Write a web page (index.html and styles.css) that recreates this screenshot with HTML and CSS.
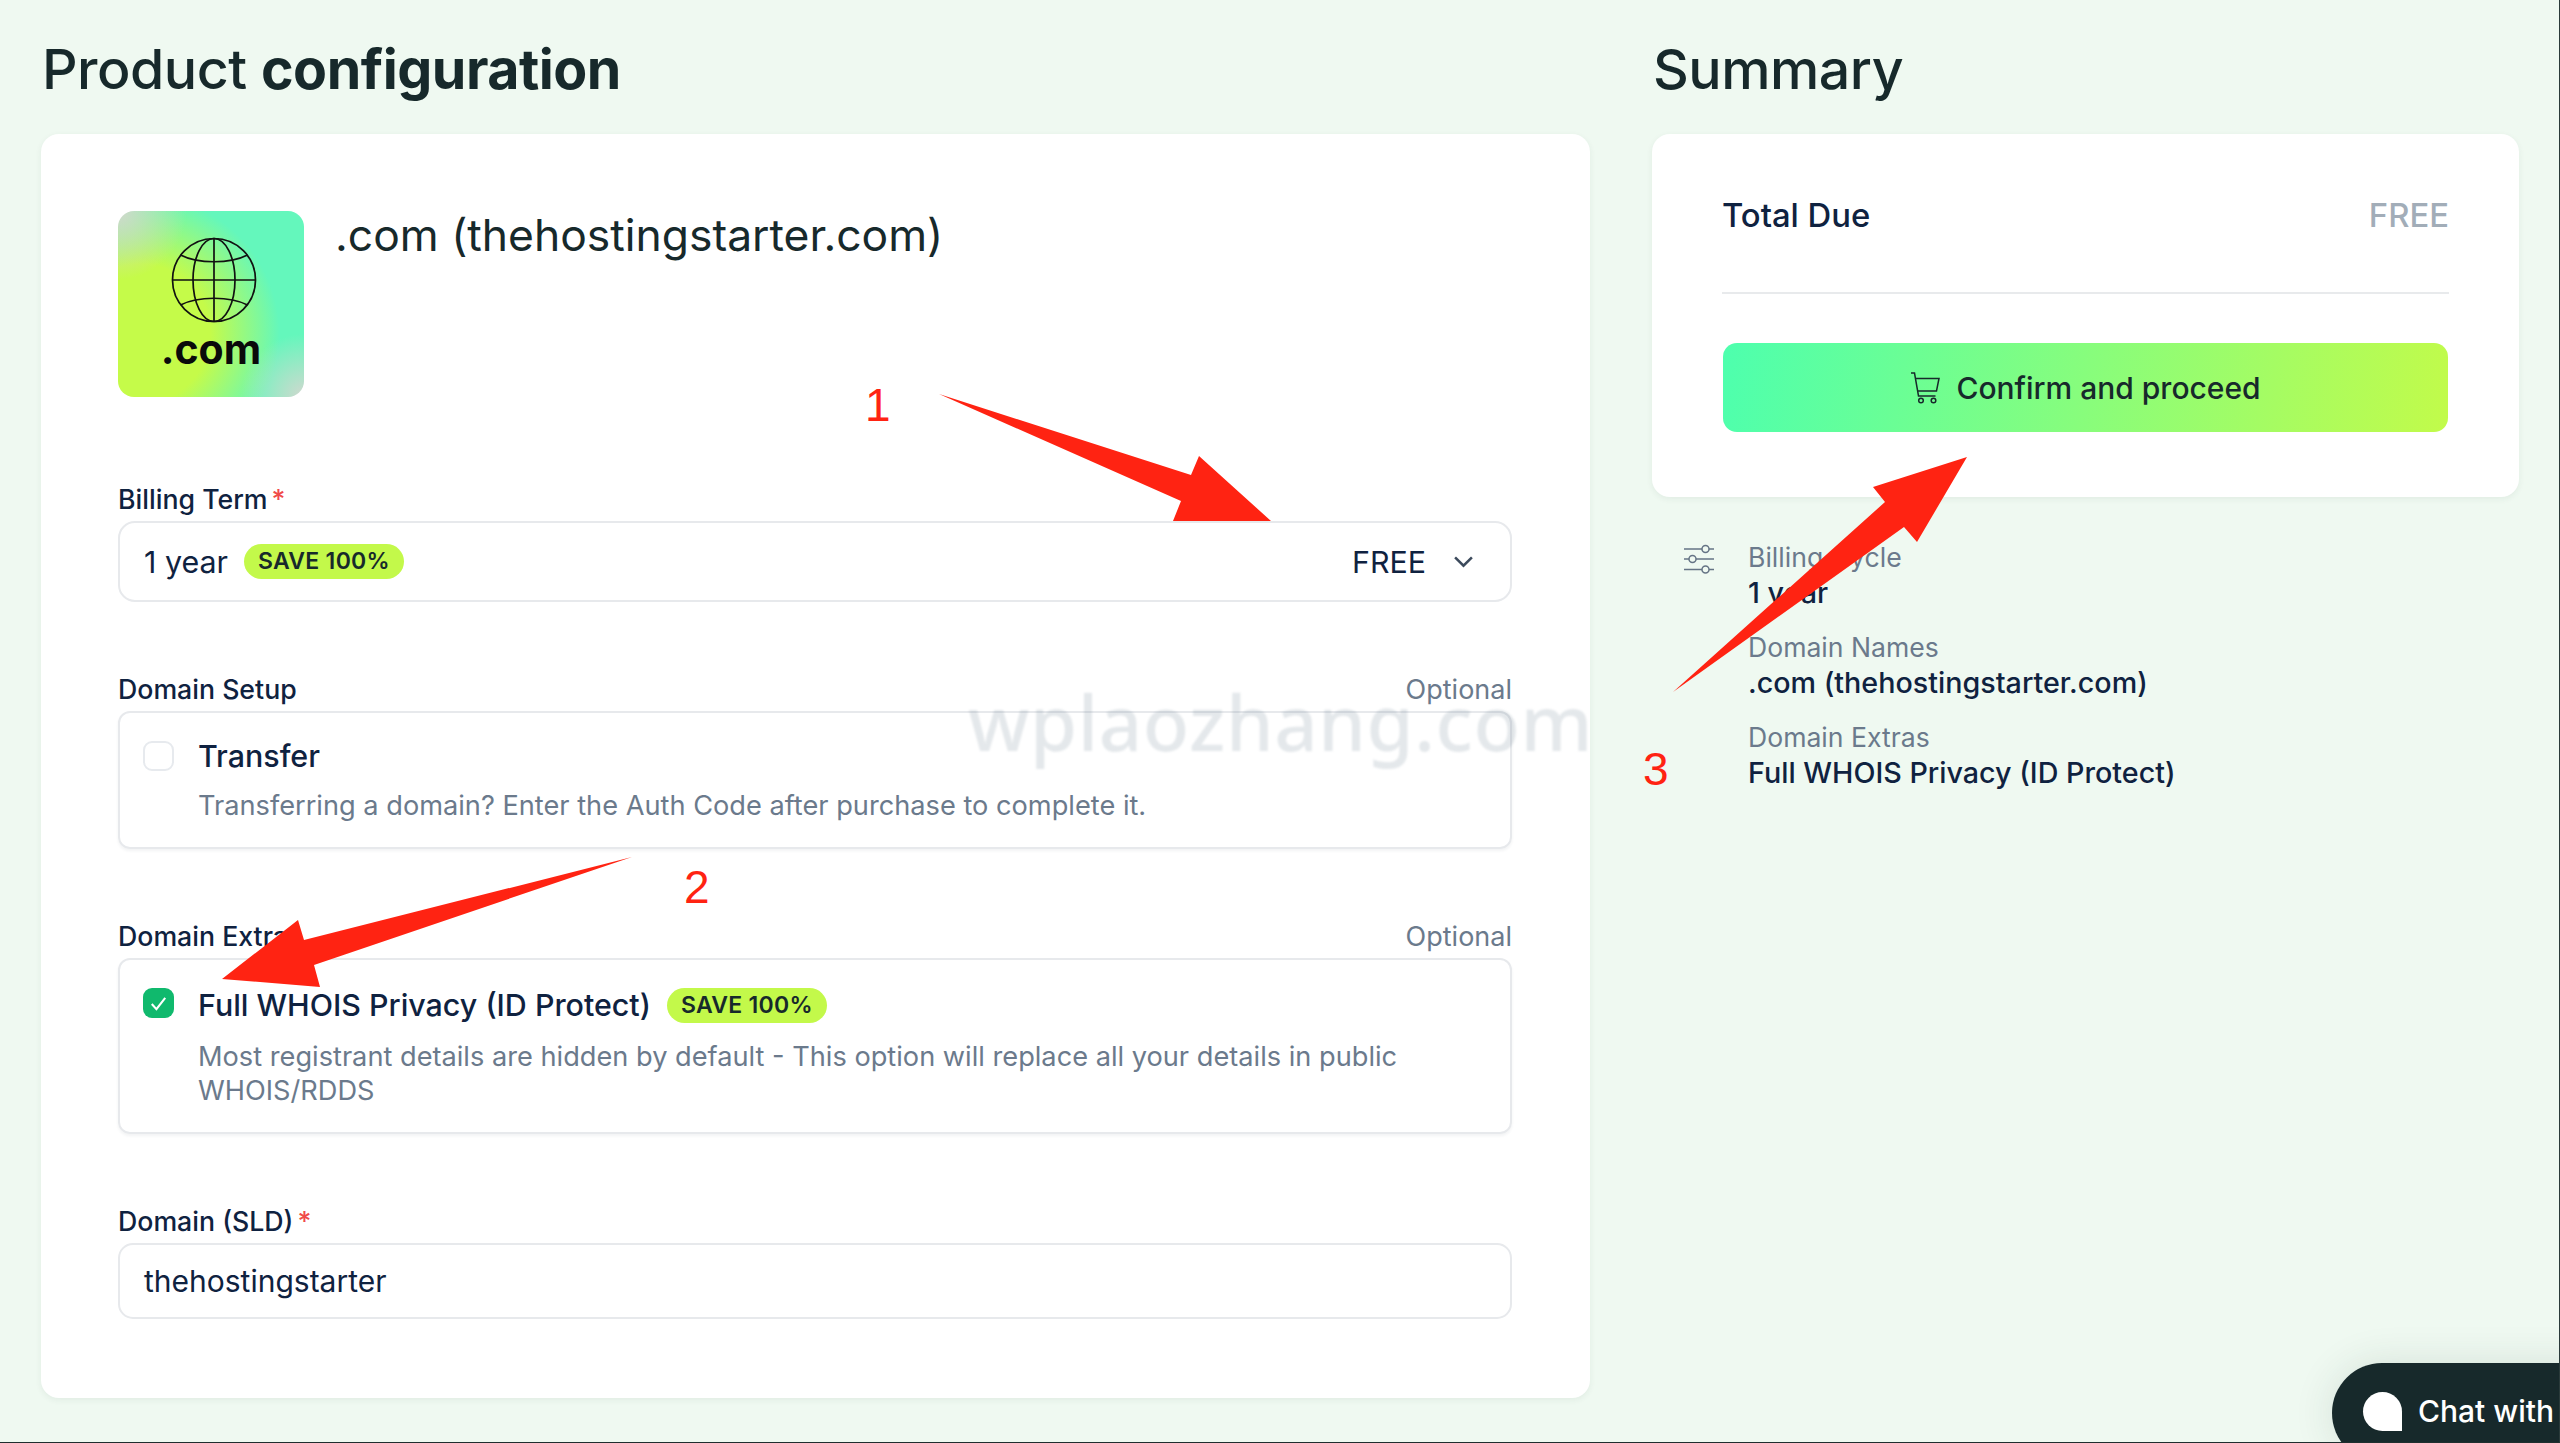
FILE: index.html
```html
<!DOCTYPE html>
<html>
	<head>
		<meta charset="UTF-8">
		<title>Product configuration</title>
		<link rel="stylesheet" href="styles.css">
	</head>
	<body>
		<div class="page">
			<div class="main-col">
				<h1 class="page-title">Product <b>configuration</b></h1>
				<div class="card config-card">
					<div class="product-head">
						<div class="product-logo">
							<svg class="globe" viewBox="0 0 88 88" fill="none" stroke="#111" stroke-width="1.7">
								<circle cx="44" cy="44" r="41.5"/>
								<ellipse cx="44" cy="44" rx="21" ry="41.5"/>
								<path d="M44 2.5V85.5M2.5 44H85.5"/>
								<path d="M10.500 19C28 28 60 28 77.500 19"/>
								<path d="M10.500 69C28 60 60 60 77.500 69"/>
							</svg>
							<span class="logo-text">.com</span>
						</div>
						<div class="product-name">.com (thehostingstarter.com)</div>
					</div>

					<div class="field field-first">
						<div class="field-label"><span>Billing Term<i class="req">*</i></span></div>
						<div class="select-box">
							<span class="select-value">1 year</span>
							<span class="badge">SAVE 100%</span>
							<span class="select-price">FREE</span>
							<svg class="chevron" viewBox="0 0 20 12" fill="none" stroke="#3c4a5c" stroke-width="2.400">
								<path d="M2 2l8 8 8-8"/>
							</svg>
						</div>
					</div>

					<div class="field">
						<div class="field-label"><span>Domain Setup</span><em>Optional</em></div>
						<div class="option-box">
							<span class="check"></span>
							<div class="option-body">
								<div class="option-title">Transfer</div>
								<div class="option-desc">Transferring a domain? Enter the Auth Code after purchase to complete it.</div>
							</div>
						</div>
					</div>

					<div class="field">
						<div class="field-label"><span>Domain Extras</span><em>Optional</em></div>
						<div class="option-box">
							<span class="check checked">
								<svg viewBox="0 0 30 30" fill="none" stroke="#fff" stroke-width="2">
									<path d="M8.500 15.500l4.500 5 8.500-11"/>
								</svg>
							</span>
							<div class="option-body">
								<div class="option-title with-badge">Full WHOIS Privacy (ID Protect)<span class="badge">SAVE 100%</span></div>
								<div class="option-desc">Most registrant details are hidden by default - This option will replace all your details in public WHOIS/RDDS</div>
							</div>
						</div>
					</div>

					<div class="field">
						<div class="field-label"><span>Domain (SLD)<i class="req">*</i></span></div>
						<div class="text-input">thehostingstarter</div>
					</div>
				</div>
			</div>

			<div class="side-col">
				<h2 class="page-title">Summary</h2>
				<div class="card summary-card">
					<div class="total-row">
						<span>Total Due</span>
						<span class="total-price">FREE</span>
					</div>
					<button class="confirm-btn" type="button">
						<svg class="cart" viewBox="0 0 30 32" fill="none" stroke="#17292b" stroke-width="1.500">
							<path d="M1 1h3.500l4 23h17"/>
							<path d="M5.500 6.500H29l-2.500 12.500H7.500"/>
							<circle cx="11" cy="28.500" r="2.300"/>
							<circle cx="23.500" cy="28.500" r="2.300"/>
						</svg>
						Confirm and proceed
					</button>
				</div>
				<div class="details">
					<svg class="sliders" viewBox="0 0 30 30" fill="none" stroke="#657485" stroke-width="1.500">
						<path d="M0 5h18M25 5h5M0 15h5M12 15h18M0 25.500h18M25 25.500h5"/>
						<circle cx="21.500" cy="5" r="3.500"/>
						<circle cx="8.500" cy="15" r="3.500"/>
						<circle cx="21.500" cy="25.500" r="3.500"/>
					</svg>
					<dl class="detail-list">
						<dt>Billing Cycle</dt>
						<dd>1 year</dd>
						<dt>Domain Names</dt>
						<dd>.com (thehostingstarter.com)</dd>
						<dt>Domain Extras</dt>
						<dd>Full WHOIS Privacy (ID Protect)</dd>
					</dl>
				</div>
			</div>

			<!-- annotations painted over the screenshot -->
			<div class="watermark">wplaozhang.com</div>
			<svg class="arrows" viewBox="0 0 2560 1443" fill="#ff2312">
				<polygon points="939,394 1191,475 1199,456 1271,521 1173,521 1181,501"/>
				<polygon points="632,857 304,940 298,920 222,979 320,987 314,965"/>
				<polygon points="1673,692 1885,502 1873,487 1967,457 1917,542 1904,527"/>
			</svg>
			<span class="step step-1">1</span>
			<span class="step step-2">2</span>
			<span class="step step-3">3</span>

			<div class="chat-btn">
				<span class="chat-bubble"></span>
				Chat with
			</div>
		</div>
	</body>
</html>
```

FILE: styles.css
```css
*{
	margin: 0;
	padding: 0;
	box-sizing: border-box;
}
html,body{
	width: 2560px;
	height: 1443px;
	overflow: hidden;
}
body{
	font-family: Inter, "Liberation Sans", sans-serif;
	color: #0f2240;
	background-color: #eff9f1;
}
.page{
	position: relative;
	display: flex;
	width: 2560px;
	height: 1443px;
	padding-left: 41px;
	overflow: hidden;
	border-right: 1px solid #2a3a3a;
	border-bottom: 1px solid #1f2e2e;
}
.main-col{
	width: 1549px;
	margin-right: 62px;
}
.side-col{
	width: 867px;
}
.page-title{
	height: 134px;
	padding: 35px 0 0 1px;
	font-size: 55.5px;
	line-height: 68px;
	font-weight: 500;
	color: #17292b;
	letter-spacing: -0.5px;
}
.page-title b{
	font-weight: 700;
}
.card{
	background-color: #fff;
	border-radius: 18px;
	box-shadow: 0 2px 6px rgba(40,70,50,.07);
}
.config-card{
	height: 1264px;
	padding: 77px 78px 0 77px;
}

.product-head{
	display: flex;
	gap: 31px;
}
.product-logo{
	display: flex;
	flex-direction: column;
	align-items: center;
	width: 186px;
	height: 186px;
	padding-top: 25px;
	border-radius: 16px;
	background:
		radial-gradient(circle at 0 0, #d3d8cd 0, rgba(211,216,205,0) 26%),
		radial-gradient(circle at 100% 100%, #d2d8cf 0, rgba(210,216,207,0) 24%),
		radial-gradient(circle at 12% 66%, #c5fb49 0, #c5fb49 34%, rgba(197,251,73,0) 68%),
		#64f7bc;
}
.globe{
	width: 88px;
	height: 88px;
	margin-left: 6px;
}
.logo-text{
	font-size: 41px;
	line-height: 50px;
	font-weight: 700;
	color: #0a0a0a;
}
.product-name{
	font-size: 44.4px;
	line-height: 48px;
	color: #17292b;
}

.field{
	margin-top: 69px;
}
.field-first{
	margin-top: 84px;
}
.field-label{
	display: flex;
	justify-content: space-between;
	height: 40px;
	font-size: 26.7px;
	line-height: 36px;
	font-weight: 500;
}
.field-label em{
	font-style: normal;
	font-weight: 400;
	font-size: 27px;
	line-height: 37px;
	color: #6b7a8c;
}
.req{
	margin-left: 4px;
	font-style: normal;
	color: #f04a4a;
}
.select-box{
	display: flex;
	align-items: center;
	height: 81px;
	padding: 0 36px 0 24px;
	border: 2px solid #e7e9ec;
	border-radius: 17px;
	font-size: 30.4px;
}
.select-value{
	margin-right: 16px;
}
.select-price{
	margin-left: auto;
	margin-right: 27px;
}
.chevron{
	width: 21px;
	height: 13px;
}
.badge{
	display: inline-block;
	height: 35px;
	padding: 0 14px;
	border-radius: 18px;
	background-color: #c3f94a;
	font-size: 23px;
	line-height: 35px;
	font-weight: 600;
	letter-spacing: .3px;
	color: #17292b;
}
.option-box{
	display: flex;
	padding: 24px 23px;
	border: 2px solid #e7e9ec;
	border-radius: 12px;
	box-shadow: 0 2px 3px rgba(30,50,70,.06);
}
.check{
	flex: none;
	width: 31px;
	height: 30px;
	margin: 4px 24px 0 0;
	border: 2px solid #e7eaee;
	border-radius: 9px;
}
.check.checked{
	border: none;
	background-color: #10b96d;
}
.check svg{
	display: block;
}
.option-title{
	font-size: 30.4px;
	line-height: 38px;
	font-weight: 500;
}
.option-title.with-badge{
	display: flex;
	align-items: center;
	gap: 16px;
	height: 42px;
}
.option-desc{
	margin-top: 14px;
	font-size: 27.2px;
	line-height: 34px;
	color: #6b7a8c;
}
.text-input{
	height: 76px;
	padding-left: 24px;
	border: 2px solid #e7e9ec;
	border-radius: 15px;
	font-size: 30px;
	line-height: 72px;
}

.summary-card{
	height: 363px;
	padding: 61px 70px 0;
}
.total-row{
	display: flex;
	justify-content: space-between;
	height: 99px;
	border-bottom: 2px solid #e8eaec;
	font-size: 32.8px;
	line-height: 40px;
	font-weight: 500;
}
.total-price{
	font-weight: 500;
	color: #a2adb8;
}
.confirm-btn{
	display: flex;
	align-items: center;
	justify-content: center;
	gap: 16px;
	width: 725px;
	height: 89px;
	margin: 49px 1px 0;
	border: none;
	border-radius: 14px;
	background: linear-gradient(100deg, #4dffae 0%, #c2fb4a 100%);
	font-family: inherit;
	font-size: 30px;
	font-weight: 500;
	color: #17292b;
}
.cart{
	width: 30px;
	height: 32px;
}
.details{
	display: flex;
	gap: 34px;
	padding: 43px 0 0 32px;
}
.sliders{
	flex: none;
	width: 30px;
	height: 30px;
	margin-top: 4px;
}
.detail-list{
	font-size: 26.6px;
	line-height: 35px;
}
.detail-list dt{
	color: #6b7a8c;
}
.detail-list dd{
	margin-bottom: 20px;
	font-size: 28.7px;
	font-weight: 500;
}

.watermark{
	position: absolute;
	left: 968px;
	top: 672px;
	font-family: "Noto Sans", sans-serif;
	font-size: 76px;
	font-weight: 500;
	line-height: 100px;
	letter-spacing: .6px;
	color: rgba(90,110,130,.16);
	filter: blur(1.2px);
}
.arrows{
	position: absolute;
	left: 0;
	top: 0;
	width: 2560px;
	height: 1443px;
}
.step{
	position: absolute;
	font-family: "Liberation Sans", sans-serif;
	font-size: 46px;
	line-height: 52px;
	color: #ff2312;
}
.step-1{
	left: 865px;
	top: 379px;
}
.step-2{
	left: 684px;
	top: 861px;
}
.step-3{
	left: 1643px;
	top: 743px;
}
.chat-btn{
	position: absolute;
	left: 2332px;
	top: 1363px;
	display: flex;
	align-items: center;
	gap: 16px;
	width: 320px;
	height: 100px;
	padding: 0 0 4px 31px;
	border-radius: 50px;
	background-color: #17292b;
	box-shadow: 0 0 40px rgba(30,60,50,.12);
	font-size: 30px;
	font-weight: 500;
	white-space: nowrap;
	color: #fff;
}
.chat-bubble{
	flex: none;
	width: 39px;
	height: 39px;
	border-radius: 50% 50% 0 50%;
	background-color: #fff;
}
```
